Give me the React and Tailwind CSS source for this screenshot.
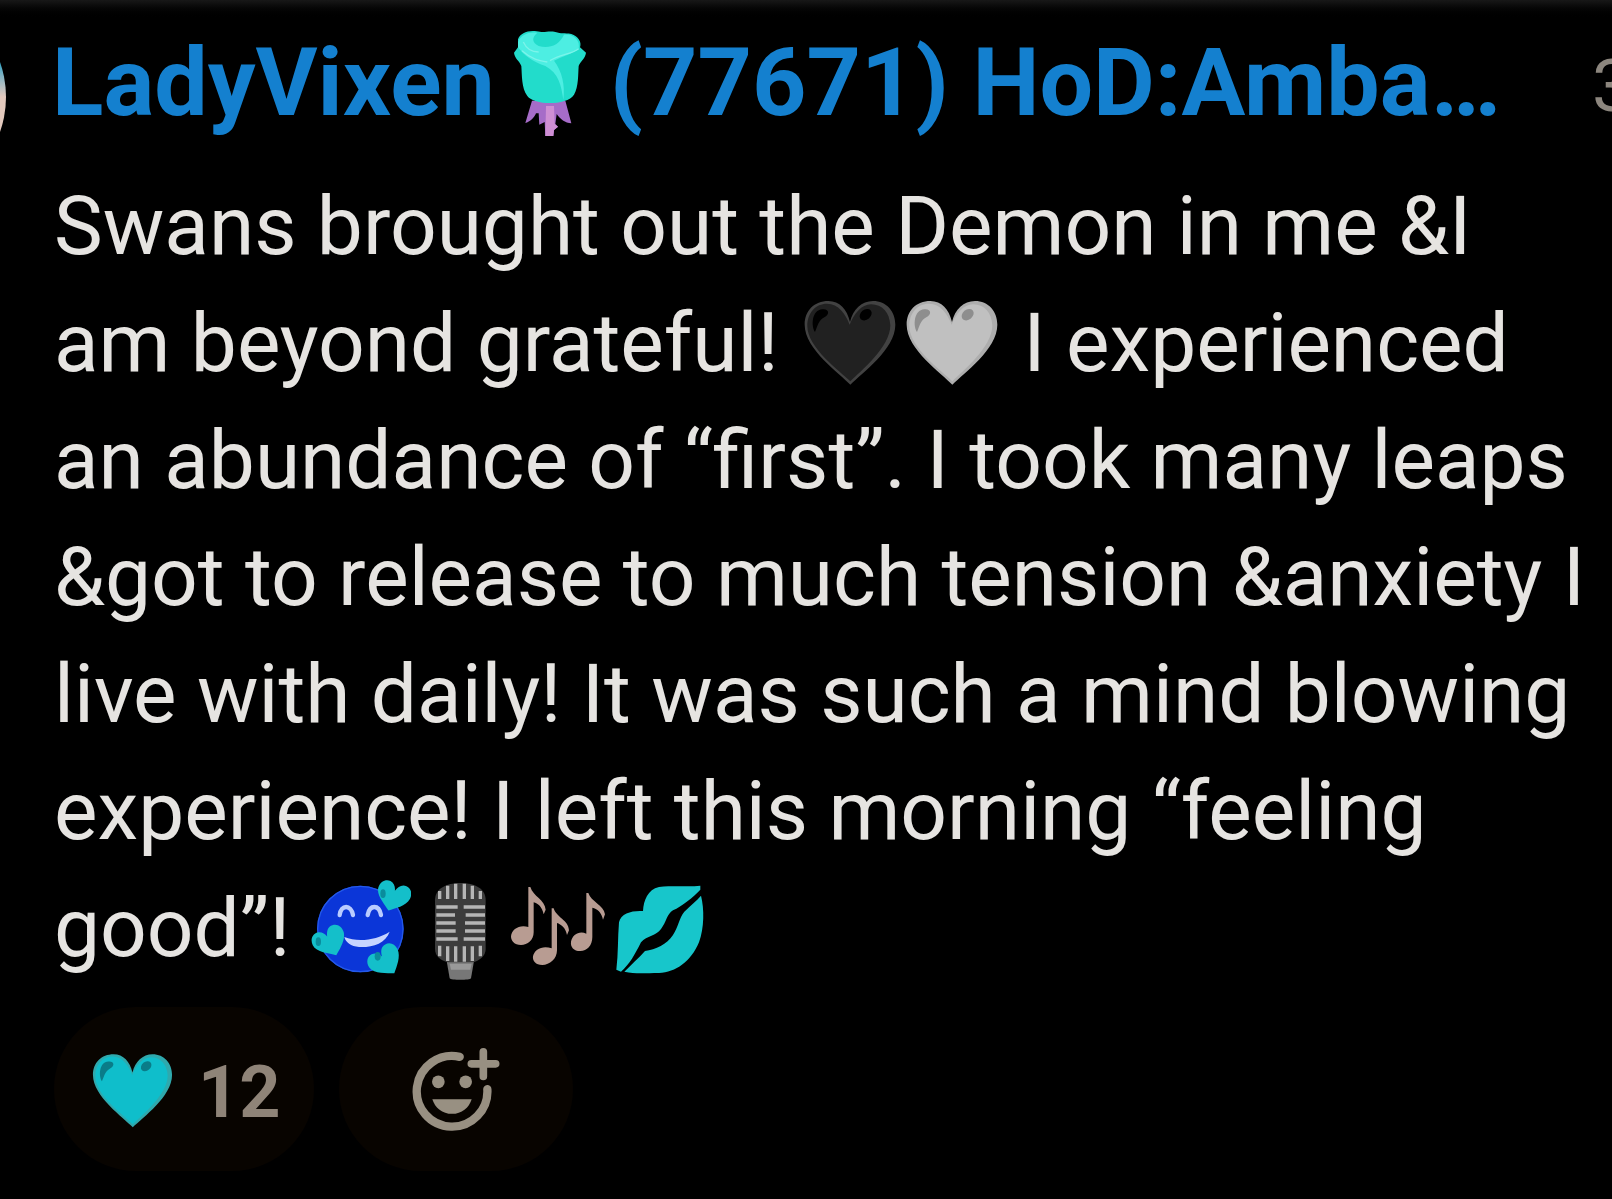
import { clsx } from "clsx";

function Heart({ fill, rim, shine, label, className }) {
  return (
    <svg viewBox="0 0 306 312" role="img" aria-label={label} className={className}>
      <path
        d="M154 272C122 238 17 166 17 92C17 50 46 21 88 21C122 21 144 46 153 84C162 46 188 21 222 21C262 21 289 52 289 92C289 166 188 238 154 272Z"
        fill={rim}
      />
      <path
        d="M154 262C124 232 25 162 25 96C25 56 50 29 84 29C118 29 140 60 152 92C164 60 188 31 216 31C250 31 272 56 274 94C274 160 184 232 154 262Z"
        fill={fill}
      />
      <path d="M48 114C36 96 38 48 70 46C92 44 92 62 76 70C58 80 56 96 48 114Z" fill={shine} />
      <ellipse cx="200" cy="62" rx="20" ry="15" transform="rotate(-40 200 62)" fill={shine} />
    </svg>
  );
}

function Rose({ className }) {
  return (
    <svg viewBox="67 50 231 330" role="img" aria-label="rose" className={className}>
      <path
        d="M130 268L110 335C124 332 138 318 142 306L150 306L152 340L168 332L170 374L194 374L196 356L208 346L200 338L204 308C214 322 230 336 248 336L230 268Z"
        fill="#a66cc8"
      />
      <path d="M172 284L170 374L194 374L196 356L208 346L198 338L196 284Z" fill="#cf8fd4" />
      <path
        d="M88 84C94 66 118 56 144 60C168 66 176 58 200 62C218 68 226 64 248 68C268 74 280 92 274 108L292 124C290 142 274 150 270 164C268 190 270 226 256 250C236 282 138 284 116 254C98 230 100 190 98 164C92 148 78 142 76 124L88 108Z"
        fill="#22dccb"
      />
      <path
        d="M88 92C96 70 120 60 146 64C130 78 128 92 150 104C180 112 210 104 226 70C254 66 276 88 270 112C246 130 222 134 196 148C220 180 230 220 224 266C218 222 210 186 170 164C130 150 108 134 88 108Z"
        fill="#4deee2"
      />
      <path d="M100 118C130 144 150 148 176 152M104 92C112 110 128 122 150 122M184 148C216 128 246 130 270 112" fill="none" stroke="#7cf4ea" strokeWidth="4" />
    </svg>
  );
}

function LoveFace({ className }) {
  const heart = "M0 34C-14 22 -42 6 -42 -14C-42 -30 -30 -40 -18 -38C-8 -36 -2 -28 0 -18C4 -30 12 -40 24 -38C38 -36 44 -24 42 -10C38 10 14 24 0 34Z";
  return (
    <svg viewBox="40 30 300 312" role="img" aria-label="smiling face with hearts" className={className}>
      <circle cx="188" cy="180" r="130" fill="#0b36d8" />
      <circle cx="188" cy="180" r="128" fill="none" stroke="#2459e8" strokeWidth="4" />
      <path d="M126 138C130 106 160 106 166 138M210 138C216 106 244 106 250 138" fill="none" stroke="#b9ccff" strokeWidth="13" strokeLinecap="round" />
      <path d="M140 204C180 220 236 214 276 188C264 224 222 236 184 234C160 232 144 220 140 204Z" fill="#c6d4ff" />
      <g fill="#14bfca">
        <path d={heart} transform="translate(285 86) rotate(18) scale(1.2)" />
        <path d={heart} transform="translate(98 222) rotate(-26) scale(1.2)" />
        <path d={heart} transform="translate(266 280) rotate(-36) scale(1.2)" />
      </g>
      <g fill="#0a8c9c">
        <ellipse cx="256" cy="74" rx="8" ry="13" />
        <ellipse cx="62" cy="218" rx="8" ry="13" />
        <ellipse cx="240" cy="262" rx="9" ry="13" />
      </g>
    </svg>
  );
}

function Microphone({ className }) {
  return (
    <svg viewBox="340 30 300 312" role="img" aria-label="studio microphone" className={className}>
      <path d="M446 270H530L520 328C518 334 458 334 456 328Z" fill="#777" />
      <path d="M456 284H522L518 302H460Z" fill="#999" />
      <path d="M412 94C412 60 444 42 488 42C534 42 564 60 564 94V240C564 262 544 274 528 280H450C430 274 412 262 412 240Z" fill="#3c3c3c" />
      <path
        d="M426 66V90M450 50V90M474 44V90M500 44V90M524 50V90M548 66V90M426 230V262M450 232V276M474 232V278M500 232V278M524 232V276M548 230V262"
        fill="none" stroke="#b5b5b5" strokeWidth="10"
      />
      <path
        d="M416 114H480M416 138H472M416 162H474M416 186H474M416 210H480M498 114H562M504 138H562M502 162H562M502 186H562M498 210H562"
        fill="none" stroke="#b5b5b5" strokeWidth="11"
      />
    </svg>
  );
}

function Notes({ className }) {
  return (
    <svg viewBox="40 30 300 312" role="img" aria-label="musical notes" className={className}>
      <g fill="#b89c92">
        <path d="M92 54H98C106 82 142 92 144 122L138 136C134 114 120 102 108 100V190C108 214 90 228 70 228C50 228 40 216 40 202C42 180 66 166 92 174Z" />
        <path d="M162 118H168C176 146 212 152 214 184L208 198C204 176 190 166 178 162V244C178 270 156 288 134 288C114 288 104 276 106 262C110 240 136 228 162 238Z" />
        <path d="M266 72H272C280 98 318 108 322 136L316 152C312 130 298 118 284 116V204C284 230 268 246 248 246C228 246 218 234 220 218C224 196 246 184 266 194Z" />
      </g>
    </svg>
  );
}

function Kiss({ className }) {
  return (
    <svg viewBox="340 30 300 312" role="img" aria-label="kiss mark" className={className}>
      <path
        d="M608 50C560 54 520 50 484 54C450 62 438 94 436 126C404 124 370 132 364 160C360 206 362 256 356 302L370 308C396 286 412 256 430 220C448 200 476 200 490 180C506 160 508 134 526 124C552 112 588 84 608 62Z"
        fill="#17c6cb"
      />
      <path
        d="M610 80C620 120 620 176 604 220C580 278 534 310 484 312C444 312 414 316 380 308C400 288 422 268 442 246C474 242 508 226 526 198C542 174 544 148 560 128C578 110 596 96 610 80Z"
        fill="#17c6cb"
      />
    </svg>
  );
}

function AddReactionIcon({ className }) {
  return (
    <svg viewBox="250 165 270 260" aria-hidden="true" className={className}>
      <path d="M396 197A106 106 0 1 0 479 294" fill="none" stroke="#989082" strokeWidth="25" strokeLinecap="round" />
      <path d="M467 182V256M431 218H504" fill="none" stroke="#989082" strokeWidth="23" strokeLinecap="round" />
      <circle cx="332" cy="272" r="19" fill="#989082" />
      <circle cx="414" cy="272" r="19" fill="#989082" />
      <path d="M314 324H432C424 350 402 368 373 368C344 368 322 350 314 324Z" fill="#989082" />
    </svg>
  );
}

function Pill({ className, children, ...props }) {
  return (
    <button
      type="button"
      className={clsx("flex h-[164px] items-center rounded-full bg-[#080400]", className)}
      {...props}
    >
      {children}
    </button>
  );
}

const emoji = "inline-block h-[104px] w-[100px] align-[-27px]";
const heartEmoji = "inline-block h-[104px] w-[102px] align-[-27px]";

export default function App() {
  return (
    <main className="min-h-screen overflow-hidden bg-black bg-linear-to-b from-[#181818] to-black to-[20px] font-['Roboto',sans-serif] whitespace-nowrap">
      <header className="flex items-start pt-[27px]">
        <div className="-mt-[35px] -ml-[204px] size-[210px] shrink-0 rounded-full bg-linear-to-b from-[#3fa6c4] from-35% to-[#e3c9bd] to-50%" />
        <h1 className="ml-[46px] flex items-center text-[95px] leading-[112px] font-bold text-[#1480cf]">
          LadyVixen
          <Rose className="mr-[22px] ml-[16px] h-[110px] w-[77px]" />
          (77671) HoD:Amba…
        </h1>
        <time className="ml-auto w-[20px] shrink-0 text-[72px] leading-[120px] text-[#8c867e]">3</time>
      </header>

      <section className="-mt-[34px] pl-[54px]">
        <p className="text-[82px] leading-[117px] text-[#e6e4e1]">
          Swans brought out the Demon in me &amp;I
          <br />
          am beyond grateful!{" "}
          <Heart label="black heart" fill="#212121" rim="#424242" shine="#000" className={heartEmoji} />
          <Heart label="white heart" fill="#c0c0c0" rim="#adadad" shine="#8e8e8e" className={heartEmoji} />
          {" "}I experienced
          <br />
          an abundance of “first”. I took many leaps
          <br />
          &amp;got to release to much tension &amp;anxiety I
          <br />
          live with daily! It was such a mind blowing
          <br />
          experience! I left this morning “feeling
          <br />
          good”!{" "}
          <LoveFace className={emoji} />
          <Microphone className={emoji} />
          <Notes className={emoji} />
          <Kiss className={emoji} />
        </p>

        <div className="mt-[20px] flex gap-[25px]">
          <Pill className="w-[260px] pt-[8px] pl-[34px]" aria-label="12 heart reactions">
            <Heart label="heart" fill="#0fbecb" rim="#2fa9ad" shine="#0a7c88" className="h-[91px] w-[89px]" />
            <span className="ml-[21px] text-[72px] leading-[84px] font-bold text-[#8f8478]">12</span>
          </Pill>
          <Pill className="w-[234px] justify-center" aria-label="Add reaction">
            <AddReactionIcon className="h-[87px] w-[90px]" />
          </Pill>
        </div>
      </section>
    </main>
  );
}
